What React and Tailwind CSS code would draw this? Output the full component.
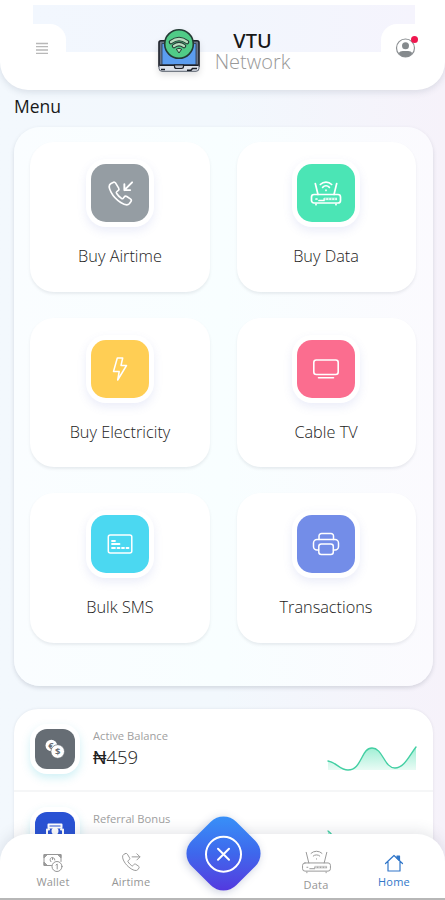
import React from 'react';

const stroke = {
  fill: 'none',
  stroke: 'currentColor',
  strokeLinecap: 'round',
  strokeLinejoin: 'round',
};

const HANDSET = 'M7.2 3.6 4.8 4.9C2.8 6.2 3.3 10 5.2 13.6c2.3 4.400 5.800 8 10 10.700 3.500 2.200 7.200 3.200 8.900 1.300l1.700-2.300c.7-1 .4-2-.6-2.700l-3.700-2.500c-1-.7-2-.5-2.700.5l-1 1.300c-.5.6-1.100.7-1.800.2-2-1.400-3.800-3.300-5.100-5.400-.4-.7-.3-1.300.3-1.700l1.300-.9c1-.7 1.200-1.600.6-2.700L10 4.300c-.6-1-1.700-1.400-2.800-.7Z';

function PhoneIcon({ outgoing, size, width }) {
  return (
    <svg width={size} height={size} viewBox="0 0 30 30" {...stroke} strokeWidth={width}>
      <path d={HANDSET} />
      {outgoing ? <path d="M16.500 8H27M23 3.800 27.200 8 23 12.200" /> : <path d="M27 3.500 19 11.500M19 5.500v6h6" strokeWidth="2" />}
    </svg>
  );
}

function RouterIcon({ width, height, strokeWidth }) {
  return (
    <svg width={width} height={height} viewBox="0 0 32 26" {...stroke} strokeWidth={strokeWidth}>
      <rect x="1.500" y="14.500" width="29" height="8.500" rx="2.500" />
      <path d="M8 14.500 5.300 3.500M24 14.500l2.700-11M6 24v.7M26 24v.7M6 19h1M9 20.500h5" />
      <rect x="14" y="17.500" width="13" height="2.800" fill="currentColor" fillOpacity=".45" stroke="none" />
      <path d="M14 19h.3M17 19h.3M20 19h.3M23 19h.3M26 19h.3" />
      <path d="M10.300 4.500a8.200 8.200 0 0 1 11.400 0M12.600 7.300a5 5 0 0 1 6.800 0M16 10.200v.3" />
    </svg>
  );
}

function BoltIcon() {
  return (
    <svg width="26" height="28" viewBox="0 0 26 28" {...stroke} strokeWidth="1.500">
      <path d="M10.300 3h5.400l-1.700 7.500h5.500L10.700 25l1.500-8.500H6.500Z" />
    </svg>
  );
}

function TvIcon() {
  return (
    <svg width="28" height="24" viewBox="0 0 28 24" {...stroke} strokeWidth="1.600">
      <rect x="1.800" y="3" width="24.400" height="14.500" rx="2.500" />
      <path d="M6.500 20.800h15" />
    </svg>
  );
}

function CardIcon() {
  return (
    <svg width="28" height="24" viewBox="0 0 28 24" {...stroke} strokeWidth="1.500">
      <rect x="2.300" y="3" width="23.500" height="18" rx="2" />
      <path d="M6 9h3M6 12h7.500" strokeWidth="1.800" />
      <path d="M6 16h3M11.500 16h2M16 16h2M20.500 16h2" strokeWidth="1.800" />
    </svg>
  );
}

function PrinterIcon() {
  return (
    <svg width="28" height="26" viewBox="0 0 28 26" {...stroke} strokeWidth="1.500">
      <path d="M7 8.500V5a2.500 2.500 0 0 1 2.500-2.500h9.500A2.500 2.500 0 0 1 21.500 5v3.500" />
      <path d="M6.500 19H5a3.500 3.500 0 0 1-3.500-3.500V12A3.500 3.500 0 0 1 5 8.500h18a3.500 3.500 0 0 1 3.500 3.500v3.500A3.500 3.500 0 0 1 23 19h-1.500" />
      <rect x="6.800" y="13" width="14.500" height="10.500" rx="2.500" />
    </svg>
  );
}

function CoinsIcon() {
  return (
    <svg width="22" height="22" viewBox="0 0 22 22" fontFamily="Open Sans" fontWeight="700" textAnchor="middle">
      <circle cx="7.300" cy="7.500" r="5.800" fill="#fff" />
      <text x="6.800" y="11" fontSize="9" fill="#666d74">€</text>
      <circle cx="13.700" cy="13.500" r="6.800" fill="#fff" stroke="#666d74" strokeWidth=".7" />
      <text x="13.700" y="16.900" fontSize="9.500" fill="#666d74">$</text>
    </svg>
  );
}

function Logo() {
  return (
    <svg width="46" height="48" viewBox="0 0 46 48" className="drop-shadow-md">
      <path d="M5 12.800h36q2 0 2 2V38H3V14.800q0-2 2-2Z" fill="#6b7688" stroke="#1c2028" strokeWidth="1.600" />
      <path d="M6 15.500h34V37H6Z" fill="#5b9df0" stroke="#28384f" strokeWidth=".8" />
      <path d="M3 37.300h40v3q0 3-3 3H6q-3 0-3-3Z" fill="#dde2ea" stroke="#4a5160" strokeWidth=".9" />
      <path d="M3.500 37.300h39" stroke="#1c2028" strokeWidth="1.600" />
      <path d="M18.500 37h9v1.800q0 1.700-2 1.700h-5q-2 0-2-1.700Z" fill="#b5bdca" stroke="#1c2028" strokeWidth="1.200" />
      <path d="M31 42.200h4l1.500-1.700H41M5 41.500h4" stroke="#1c2028" strokeWidth="1.500" fill="none" />
      <circle cx="23" cy="16" r="14.300" fill="#50cb87" stroke="#243b35" strokeWidth="1.600" />
      <g fill="none" strokeLinecap="round">
        <path d="M15 14q8-6 16 0M18 18q5-3.600 10 0" stroke="#263b35" strokeWidth="4.600" />
        <path d="M15 14q8-6 16 0M18 18q5-3.600 10 0" stroke="#b9dcbf" strokeWidth="2.200" />
      </g>
      <path d="m20.300 21.200 2.700 3.800 2.700-3.800q-2.700-1.800-5.400 0Z" fill="#b9dcbf" stroke="#263b35" />
    </svg>
  );
}

const menu = [
  { label: 'Buy Airtime', color: 'bg-[#959da3]', icon: <PhoneIcon size={29} width={1.700} /> },
  { label: 'Buy Data', color: 'bg-[#4be5b5]', icon: <RouterIcon width={32} height={26} strokeWidth={1.700} /> },
  { label: 'Buy Electricity', color: 'bg-[#ffce54]', icon: <BoltIcon /> },
  { label: 'Cable TV', color: 'bg-[#fb6d8f]', icon: <TvIcon /> },
  { label: 'Bulk SMS', color: 'bg-[#4bd8f1]', icon: <CardIcon /> },
  { label: 'Transactions', color: 'bg-[#738de8]', icon: <PrinterIcon /> },
];

const WAVE = 'M1 16C9 17 13 25 21 25C35 25 34 3 45 3C56 3 57 23 68 23C77 23 82 11 89 2';
const DIP = 'M1 3C9 8 13 25 21 25C35 25 34 12 45 12C56 12 57 23 68 23C77 23 82 20 89 16';

function Header() {
  return (
    <header className="relative z-10 h-[90px] shrink-0 rounded-b-[28px] bg-white pt-[5px] shadow-[0_2px_7px_rgba(70,85,110,0.16)]">
      <div className="mr-[30px] ml-[33px] h-[47px] bg-gradient-to-r from-[#f2f7fe] via-[#f2f6fd] to-[#f5f4fd]" />
      <div className="absolute inset-x-0 top-6 flex h-[36px] justify-between">
        <button className="flex w-[66px] items-start justify-center rounded-tr-2xl bg-white pt-[18px] pl-[18px]">
          <svg width="14" height="13" viewBox="0 0 14 13" stroke="#b8b8b8" strokeWidth="1.300">
            <path d="M1 1.500h12M1 4.700h12M1 8h12M1 11.300h12" />
          </svg>
        </button>
        <div className="flex">
          <div className="h-[52px] pt-[4px]"><Logo /></div>
          <div className="ml-[12px] w-[78px] pt-[4px] text-center">
            <div className="font-['Noto_Sans',sans-serif] text-[20px] leading-[26px] font-medium text-[#171717]">VTU</div>
            <div className="text-[20px] leading-[15px] font-light text-[#999]">Network</div>
          </div>
        </div>
        <button className="flex w-[64px] items-start rounded-tl-2xl bg-white pt-[10px] pl-[13px]">
          <svg width="26" height="26" viewBox="0 0 26 26">
            <circle cx="11.500" cy="14" r="9" fill="none" stroke="#8d9194" strokeWidth="1.200" />
            <circle cx="11.500" cy="11.800" r="3.500" fill="#858a8d" />
            <path d="M4.700 19q1.300-2 4-2h5.600q2.700 0 4 2-2.200 4-6.800 4t-6.800-4Z" fill="#858a8d" />
            <circle cx="20.500" cy="5.500" r="3.500" fill="#ef174f" />
          </svg>
        </button>
      </div>
    </header>
  );
}

function MenuCard({ label, color, icon }) {
  return (
    <button className="flex h-[149.500px] flex-col items-center rounded-[24px] bg-white pt-[17px] shadow-[0_2px_3px_rgba(80,90,110,0.11)]">
      <span className="rounded-[20px] bg-white p-[5px] shadow-[0_4px_10px_rgba(100,115,210,0.13)]">
        <span className={`flex size-[58px] items-center justify-center rounded-[15px] text-white ${color}`}>{icon}</span>
      </span>
      <span className="mt-[17px] text-[16.300px] leading-6 font-light text-[#222]">{label}</span>
    </button>
  );
}

function Balance({ label, amount, color, icon, line }) {
  return (
    <div className="flex h-[83px] items-start border-b-2 border-[#f5f6f7] pt-[15px] pr-[16px] pl-[16px]">
      <span className="rounded-[17px] bg-white p-[5px] shadow-[0_4px_9px_rgba(70,200,220,0.25)]">
        <span className={`flex size-10 items-center justify-center rounded-[12px] ${color}`}>{icon}</span>
      </span>
      <div className="ml-[13px] pt-[4px]">
        <div className="text-[11.200px] leading-[16px] text-[#a0a0a0]">{label}</div>
        <div className="text-[18.500px] leading-[26px] font-light text-[#222]">{amount}</div>
      </div>
      <svg width="90" height="28" viewBox="0 0 90 28" className="mt-[21px] ml-auto">
        <defs>
          <linearGradient id="area" x2="0" y2="1">
            <stop stopColor="#6be5bc" stopOpacity=".65" />
            <stop offset="1" stopColor="#6be5bc" stopOpacity=".15" />
          </linearGradient>
        </defs>
        <path d={`${line}V25H1Z`} fill="url(#area)" />
        <path d={line} {...stroke} stroke="#43cfa3" strokeWidth="1.400" />
      </svg>
    </div>
  );
}

function WalletIcon() {
  return (
    <svg width="22" height="21" viewBox="0 0 22 21" {...stroke} strokeWidth="1">
      <path d="M9.500 13.500H2V2.500h17v7" />
      <path d="M2 5.500V2.500h3ZM19 5.500V2.500h-3ZM2 10.500v3h3Z" fill="currentColor" />
      <path d="M12.800 8a2.400 2.400 0 1 0-3.800 1.800M10.500 6v1.500" />
      <circle cx="15" cy="14.500" r="5" />
      <path d="m14 13 1.200-1v5" />
    </svg>
  );
}

function NavItem({ icon, label, className = '' }) {
  return (
    <a className={`flex flex-col items-center text-[11px] tracking-[0.2px] ${className}`}>
      <span className="flex h-[24px] items-center justify-center">{icon}</span>
      <span className="leading-[16px]">{label}</span>
    </a>
  );
}

function BottomNav() {
  return (
    <nav className="absolute inset-x-0 bottom-0 z-20 flex h-[66px] items-start rounded-t-[28px] border-b-2 border-[#b7b7b7] bg-white pl-[14px] text-[#969696] shadow-[0_-3px_14px_rgba(60,70,90,0.13)]">
      <NavItem className="w-[78px] pt-[16px]" label="Wallet" icon={<WalletIcon />} />
      <NavItem className="w-[78px] pt-[16px]" label="Airtime" icon={<PhoneIcon outgoing size={22} width={1.300} />} />
      <button className="-mt-[12.500px] ml-[21.500px] flex size-[63px] rotate-45 items-center justify-center rounded-[18px] bg-gradient-to-br from-[#3698fa] via-[#3e67ec] to-[#552bdc] text-white shadow-[0_2px_8px_rgba(50,70,130,0.25)]">
        <svg width="40" height="40" viewBox="0 0 40 40" {...stroke} strokeWidth="2" className="-rotate-45">
          <circle cx="20" cy="20" r="17.500" />
          <path d="m14.500 14.500 11 11M25.500 14.500l-11 11" />
        </svg>
      </button>
      <NavItem className="ml-[21.500px] w-[80px] pt-[15px] [&>span:last-child]:mt-[4px]" label="Data" icon={<RouterIcon width={31} height={25} strokeWidth={1} />} />
      <NavItem
        className="w-[76px] pt-[16px] text-[#3277c9]"
        label="Home"
        icon={(
          <svg width="20" height="20" viewBox="0 0 20 20" {...stroke} strokeWidth="1.200" className="mt-[1px]">
            <path d="m1.500 10.500 8.500-8 8.500 8M4 9v9h12V9" />
            <path d="M13 5V3h2.500v4.500Z" fill="currentColor" />
          </svg>
        )}
      />
    </nav>
  );
}

export default function App() {
  return (
    <div className="relative flex h-[900px] w-[445px] flex-col overflow-hidden bg-gradient-to-r from-[#f3f8fd] via-[#f2f8fd] to-[#f6f2fa] font-['Open_Sans',sans-serif]">
      <Header />
      <h2 className="mt-[4px] pl-[14px] text-[17.500px] leading-6 font-medium text-[#181818]">Menu</h2>
      <main className="mt-[9px] mr-[12px] ml-[14px] grid h-[559px] shrink-0 grid-cols-[180px_179px] content-start gap-x-[26.500px] gap-y-[26px] rounded-[26px] bg-gradient-to-r from-[#fafdff] via-[#f8feff] to-[#fbfafe] pt-[15px] pl-[16px] shadow-[0_2px_4px_rgba(80,90,110,0.2)]">
        {menu.map((item) => <MenuCard key={item.label} {...item} />)}
      </main>
      <section className="mt-[23px] mr-[12px] ml-[14px] shrink-0 rounded-t-[24px] bg-white shadow-[0_0_3px_rgba(80,90,110,0.12)]">
        <Balance label="Active Balance" amount="₦459" color="bg-[#666d74]" icon={<CoinsIcon />} line={WAVE} />
        <Balance
          label="Referral Bonus"
          amount="₦3500"
          color="bg-[#2952d4]"
          line={DIP}
          icon={(
            <svg width="20" height="20" viewBox="0 0 20 20" {...stroke} stroke="#fff" strokeWidth="2">
              <path d="M3.500 2.500h13v3h-13ZM2 17V7.500h2M18 17V7.500h-2" />
              <circle cx="10" cy="9" r="2.500" fill="#fff" />
            </svg>
          )}
        />
      </section>
      <BottomNav />
    </div>
  );
}
